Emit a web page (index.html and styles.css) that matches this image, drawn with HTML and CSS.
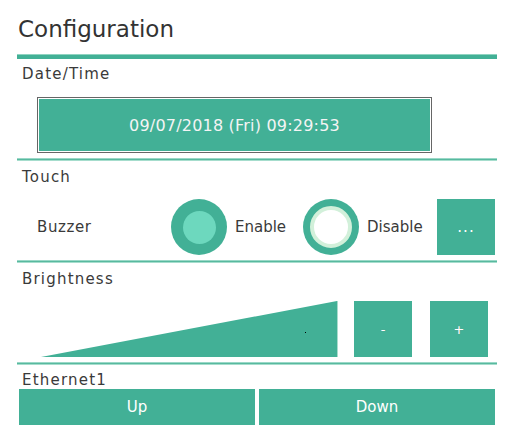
FILE: index.html
```html
<!DOCTYPE html>
<html>
<head>
<meta charset="utf-8">
<link rel="stylesheet" href="styles.css">
</head>
<body>
<div class="page">
  <h1 class="title">Configuration</h1>
  <div class="rule-thick"></div>

  <section class="sec">
    <div class="label label-first">Date/Time</div>
    <div class="datebox"><div class="dateinner">09/07/2018 (Fri) 09:29:53</div></div>
  </section>
  <div class="rule"></div>

  <section class="sec">
    <div class="label">Touch</div>
    <div class="touch-row">
      <div class="row-name">Buzzer</div>
      <div class="radio radio-on"><div class="radio-dot"></div></div>
      <div class="radio-text">Enable</div>
      <div class="radio radio-off"><div class="radio-hole"></div></div>
      <div class="radio-text">Disable</div>
      <div class="btn btn-more">...</div>
    </div>
  </section>
  <div class="rule"></div>

  <section class="sec">
    <div class="label">Brightness</div>
    <div class="bright-row">
      <svg class="ramp" width="297" height="56" viewBox="0 0 297 56">
        <polygon points="0,56 296,0 296,56" fill="#42b096"/>
        <line x1="296.5" y1="0" x2="296.5" y2="56" stroke="#a9dccd" stroke-width="1"/>
        <rect x="264" y="31" width="1" height="1" fill="#000"/>
      </svg>
      <div class="btn btn-step btn-minus">-</div>
      <div class="btn btn-step btn-plus">+</div>
    </div>
  </section>
  <div class="rule"></div>

  <section class="sec">
    <div class="label label-eth">Ethernet1</div>
    <div class="eth-row">
      <div class="btn btn-eth">Up</div>
      <div class="btn btn-eth">Down</div>
    </div>
  </section>
</div>
</body>
</html>
```
FILE: styles.css
```css
html, body {
  margin: 0;
  padding: 0;
  background: #ffffff;
}
body {
  font-family: "DejaVu Sans", "Noto Sans", sans-serif;
  color: #3a3a3a;
}
.page {
  width: 480px;
  padding-left: 17px;
}
.title {
  margin: 0;
  padding: 15px 0 0 1px;
  font-size: 23px;
  font-weight: normal;
  line-height: 28px;
  color: #333333;
}
.rule-thick {
  margin-top: 11px;
  height: 4px;
  border-top: 1px solid #8fd3c0;
  background: #42b096;
}
.rule {
  margin-top: 5px;
  height: 3px;
  background: linear-gradient(#9ad8c7 0, #9ad8c7 1px, #58b99f 1px, #58b99f 2px, #a6ddcd 2px);
}
.label {
  margin-top: 7px;
  padding-left: 5px;
  font-size: 15px;
  line-height: 18px;
  letter-spacing: 1.2px;
  color: #3a3a3a;
}
.label-first {
  margin-top: 6px;
}
.label-eth {
  margin-top: 6px;
}
.datebox {
  margin: 14px 0 0 20px;
  width: 391px;
  height: 52px;
  border: 1px solid #666666;
  padding: 1px;
  background: #ffffff;
}
.dateinner {
  height: 100%;
  background: #42b096;
  color: #f4f4f4;
  font-size: 16px;
  letter-spacing: 0.2px;
  display: flex;
  align-items: center;
  justify-content: center;
}
.touch-row {
  margin-top: 13px;
  display: flex;
  align-items: center;
  height: 56px;
}
.row-name {
  width: 134px;
  padding-left: 20px;
  font-size: 15px;
  letter-spacing: 0.6px;
}
.radio {
  width: 56px;
  height: 56px;
  border-radius: 50%;
  background: #42b096;
  display: flex;
  align-items: center;
  justify-content: center;
  flex: none;
}
.radio-dot {
  width: 33px;
  height: 33px;
  border-radius: 50%;
  background: #6dd8be;
}
.radio-hole {
  width: 34px;
  height: 34px;
  border-radius: 50%;
  background: #ffffff;
  border: 4px solid #d2f0da;
}
.radio-text {
  width: 68px;
  padding-left: 8px;
  font-size: 15px;
  flex: none;
}
.btn {
  background: #42b096;
  color: #ffffff;
  display: flex;
  align-items: center;
  justify-content: center;
  font-size: 15px;
  flex: none;
}
.btn-more {
  width: 58px;
  height: 56px;
  margin-left: 2px;
  letter-spacing: 1px;
}
.bright-row {
  margin-top: 13px;
  display: flex;
  height: 56px;
  padding-left: 24px;
}
.ramp {
  display: block;
  flex: none;
}
.btn-step {
  width: 58px;
  height: 56px;
  font-size: 13px;
  text-shadow: 0 0 1px #8a8a8a;
}
.btn-minus {
  margin-left: 16px;
}
.btn-plus {
  margin-left: 18px;
}
.eth-row {
  display: flex;
  gap: 4px;
  padding: 0 2px;
}
.btn-eth {
  flex: 1;
  height: 36px;
  font-size: 15px;
}
```
